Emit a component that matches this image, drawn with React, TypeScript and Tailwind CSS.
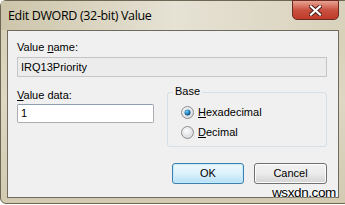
import React from "react";

const body = { fontFamily: '"Liberation Sans", Arial, sans-serif' };

function Radio({ checked }: { checked?: boolean }) {
  return (
    <svg width="13" height="13" viewBox="0 0 13 13" className="shrink-0">
      <defs>
        <radialGradient id="rbg" cx="40%" cy="35%" r="70%">
          <stop offset="0%" stopColor="#ffffff" />
          <stop offset="100%" stopColor="#cfd3d8" />
        </radialGradient>
        <radialGradient id="dot" cx="40%" cy="35%" r="70%">
          <stop offset="0%" stopColor="#7fd0f4" />
          <stop offset="60%" stopColor="#1a77b4" />
          <stop offset="100%" stopColor="#0d3f6b" />
        </radialGradient>
      </defs>
      <circle cx="6.5" cy="6.5" r="6" fill="url(#rbg)" stroke="#8e8f8f" strokeWidth="1" />
      <circle cx="6.5" cy="6.5" r="4.3" fill="none" stroke="#e6e8eb" strokeWidth="0.8" />
      {checked && <circle cx="6.5" cy="6.5" r="3" fill="url(#dot)" />}
    </svg>
  );
}

export default function App() {
  return (
    <div className="relative w-[345px] h-[205px] overflow-hidden bg-white" style={body}>
      {/* Window frame */}
      <div className="w-[350px] h-[204px] rounded-[6px] border border-[#6d6753] bg-gradient-to-b from-[#d6ceb3] via-[#ddd7c3] to-[#d2cab1] flex flex-col">
        {/* Title bar */}
        <div className="relative h-[29px] flex items-center pl-[7px] bg-gradient-to-r from-[#cdc5aa] via-[#e6e2d4] to-[#d8d1bb]">
          <span
            className="text-[12.5px] text-black leading-none mt-[1px]"
            style={{ fontFamily: '"Open Sans", "Noto Sans", sans-serif', letterSpacing: "-0.35px" }}
          >
            Edit DWORD (32-bit) Value
          </span>
          <div className="absolute top-[-1px] right-[10px] w-[47px] h-[20px] rounded-b-[5px] border border-[#6b2a22] bg-gradient-to-b from-[#e8a394] via-[#c9503f] to-[#c03a2b] flex items-center justify-center">
            <svg width="13" height="11" viewBox="0 0 13 11">
              <path d="M2 1.5 L11 9.5 M11 1.5 L2 9.5" stroke="#4a1a14" strokeWidth="4" strokeLinecap="square" />
              <path d="M2 1.5 L11 9.5 M11 1.5 L2 9.5" stroke="#ffffff" strokeWidth="2.2" strokeLinecap="square" />
            </svg>
          </div>
        </div>

        {/* Client area */}
        <div className="ml-[6px] w-[332px] h-[168px] border border-[#6e6a5d] bg-[#f0f0f0] pl-[9px] pr-[10px] pt-[10px] flex flex-col text-[11px] text-black">
          <div className="leading-[13px]">
            Value <span className="underline">n</span>ame:
          </div>
          <div className="mt-[3px] h-[20px] w-[310px] border border-[#c5c5c5] bg-[#ececec] flex items-center pl-[3px] leading-none">
            IRQ13Priority
          </div>

          <div className="mt-[11px] flex">
            <div className="flex flex-col w-[137px]">
              <div className="leading-[13px] mt-[1px]">
                <span className="underline">V</span>alue data:
              </div>
              <div className="mt-[2px] h-[19px] w-[137px] rounded-[2px] border border-[#abadb3] border-t-[#8e9db0] bg-white flex items-center pl-[3px] leading-none">
                1
              </div>
            </div>

            <div className="ml-[13px] mt-[4px] relative w-[160px] h-[55px] rounded-[3px] border border-[#d5dfe5] flex flex-col pl-[13px] pt-[13px] gap-[7px]">
              <span className="absolute -top-[8px] left-[5px] px-[2px] bg-[#f0f0f0] leading-[13px]">Base</span>
              <div className="flex items-center gap-[4px] leading-none">
                <Radio checked />
                <span>
                  <span className="underline">H</span>exadecimal
                </span>
              </div>
              <div className="flex items-center gap-[4px] leading-none">
                <Radio />
                <span>
                  <span className="underline">D</span>ecimal
                </span>
              </div>
            </div>
          </div>

          <div className="mt-[16px] flex justify-end gap-[10px] pr-[1px]">
            <div className="w-[72px] h-[21px] rounded-[3px] border border-[#3c7fb1] bg-gradient-to-b from-[#f0f9fe] via-[#dcf1fc] to-[#b5e0f7] flex items-center justify-center shadow-[inset_0_0_0_1px_#c7eafa]">
              OK
            </div>
            <div className="w-[73px] h-[21px] rounded-[3px] border border-[#707070] bg-gradient-to-b from-[#f2f2f2] via-[#ebebeb] to-[#d3d3d3] flex items-center justify-center shadow-[inset_0_0_0_1px_#fcfcfc]">
              Cancel
            </div>
          </div>
        </div>
      </div>

      {/* Watermark */}
      <span
        className="absolute left-[272px] top-[186px] text-[13.5px] leading-none text-black tracking-[-0.4px]"
        style={{ textShadow: "0 0 2px #fff, 0 0 2px #fff" }}
      >
        wsxdn.com
      </span>
    </div>
  );
}
